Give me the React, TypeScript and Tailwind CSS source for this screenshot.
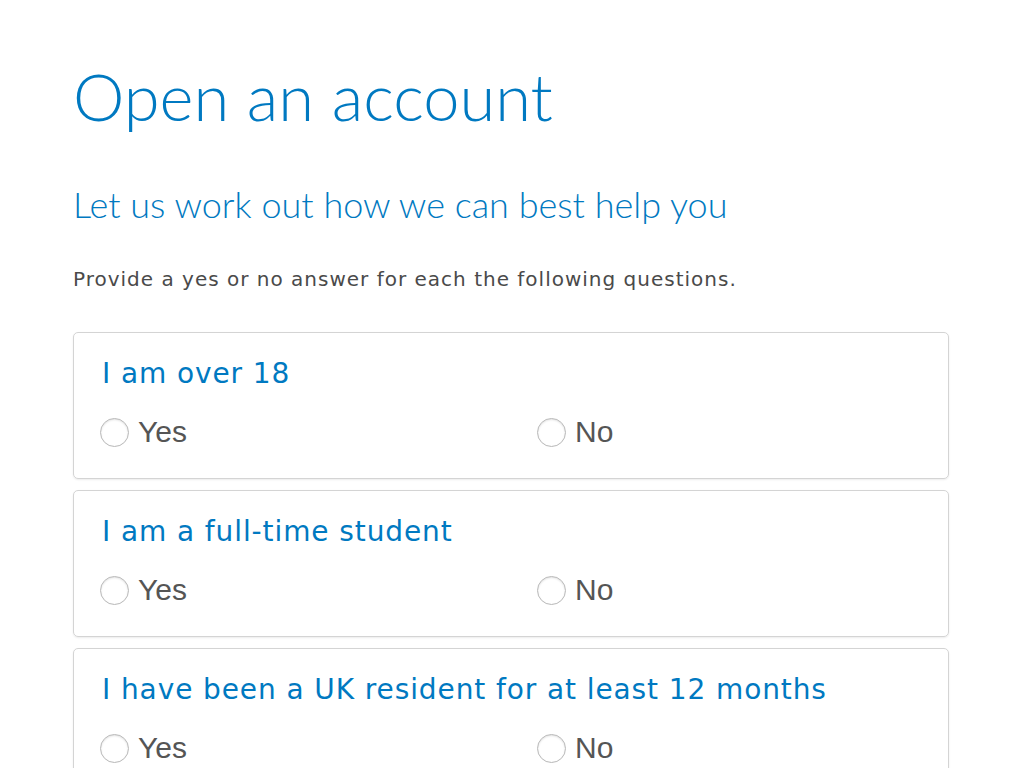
import React, { useState } from "react";

type Question = { id: string; label: string };

const QUESTIONS: Question[] = [
  { id: "over18", label: "I am over 18" },
  { id: "student", label: "I am a full-time student" },
  { id: "resident", label: "I have been a UK resident for at least 12 months" },
];

function Radio({ checked, onClick, label }: { checked: boolean; onClick: () => void; label: string }) {
  return (
    <button type="button" onClick={onClick} className="flex items-center gap-[9px] w-[437px] shrink-0 text-left">
      <span className="w-[29px] h-[29px] rounded-full border border-[#b8b8b8] bg-white shadow-[inset_0_1px_2px_rgba(0,0,0,0.12)] flex items-center justify-center">
        {checked && <span className="w-[13px] h-[13px] rounded-full bg-[#0079c1]" />}
      </span>
      <span className="text-[30px] leading-none text-[#555] font-['Liberation_Sans',Arial,sans-serif]">{label}</span>
    </button>
  );
}

export default function App() {
  const [answers, setAnswers] = useState<Record<string, string>>({});

  return (
    <div className="min-h-[768px] bg-white px-[73px] pt-[56px] font-['DejaVu_Sans',Verdana,sans-serif]">
      <h1 className="text-[65px] leading-[80px] font-light text-[#0079c1] font-['Lato',sans-serif]">Open an account</h1>
      <h2 className="mt-[46px] text-[36px] leading-[44px] font-light text-[#0079c1] font-['Lato',sans-serif]">
        Let us work out how we can best help you
      </h2>
      <p className="mt-[40px] text-[20px] leading-[26px] tracking-[1px] text-[#4a4a4a]">
        Provide a yes or no answer for each the following questions.
      </p>

      <div className="mt-[40px] flex flex-col gap-[11px] w-[876px]">
        {QUESTIONS.map((q) => (
          <div key={q.id} className="border border-[#d4d4d4] rounded-[5px] shadow-[0_1px_2px_rgba(0,0,0,0.08)] pt-[23px] pb-[31px]">
            <div className="px-[28px] text-[28px] leading-[36px] tracking-[0.9px] text-[#0079c1]">{q.label}</div>
            <div className="mt-[25px] flex px-[26px]">
              <Radio label="Yes" checked={answers[q.id] === "yes"} onClick={() => setAnswers({ ...answers, [q.id]: "yes" })} />
              <Radio label="No" checked={answers[q.id] === "no"} onClick={() => setAnswers({ ...answers, [q.id]: "no" })} />
            </div>
          </div>
        ))}
      </div>
    </div>
  );
}
